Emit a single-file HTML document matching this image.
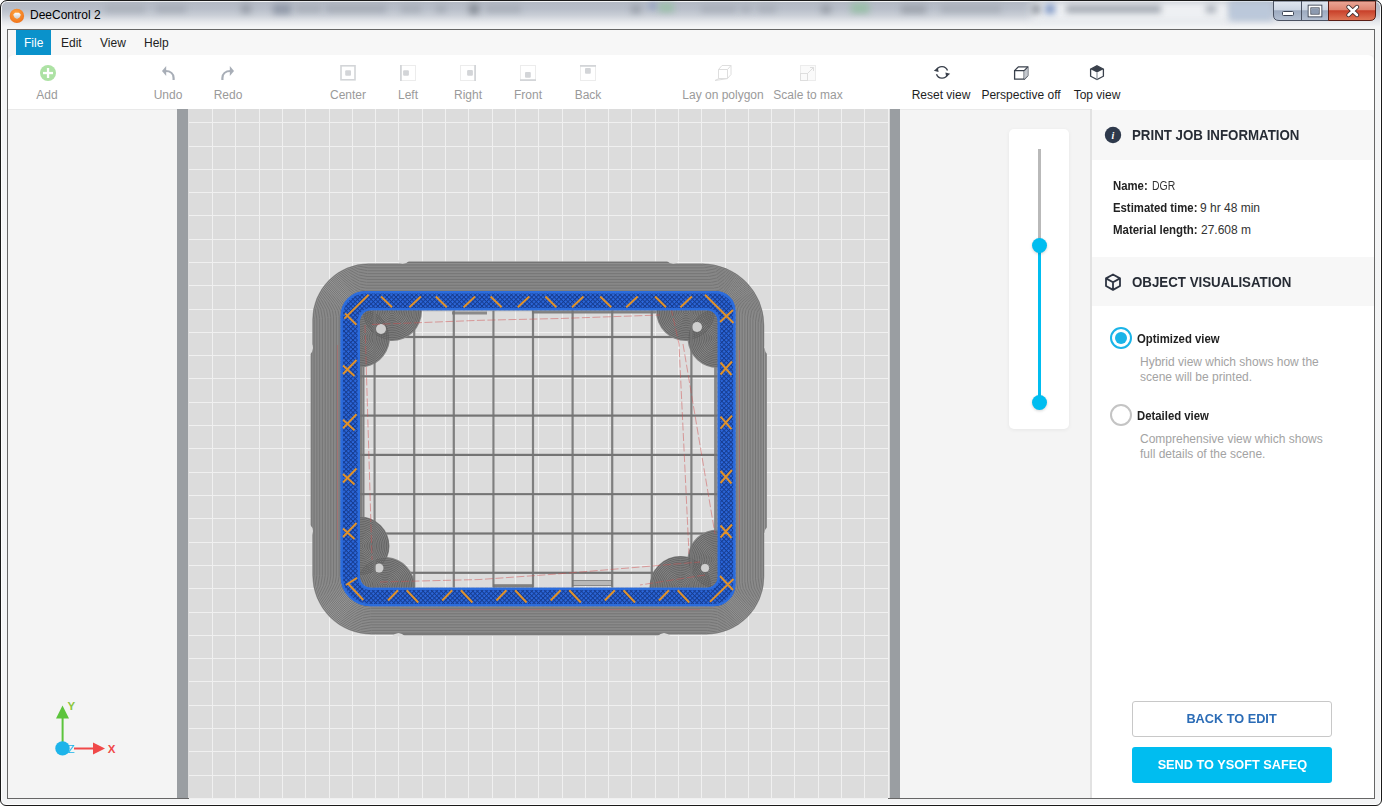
<!DOCTYPE html>
<html><head><meta charset="utf-8">
<style>
*{margin:0;padding:0;box-sizing:border-box}
html,body{width:1382px;height:806px;overflow:hidden;background:#fff}
body{font-family:"Liberation Sans",sans-serif;position:relative}
.a{position:absolute}
.t{position:absolute;white-space:nowrap;line-height:1}
#frame{left:0;top:0;width:1382px;height:806px;border:1px solid #1a1a1a;border-radius:7px 7px 6px 6px;box-shadow:inset 0 0 0 1px rgba(255,255,255,0.85);
 background:linear-gradient(#b3b9c4 0px,#b8bec9 8px,#c9ced6 14px,#e6e8ec 21px,#f4f5f6 26px,#f3f4f5 100%);overflow:hidden}
.tl{font-size:12px;color:#9a9a9a;text-align:center;width:100px;top:89px}
.tl.on{color:#1e1e1e}
.ph{font-size:14px;font-weight:bold;color:#272c35;transform-origin:0 0;transform:scaleX(0.95)}
.inf{font-size:12px;color:#333}
.inf b{color:#222}
.rl{font-size:12px;font-weight:bold;color:#222;transform-origin:0 0;transform:scaleX(0.945)}
.ds{font-size:12px;color:#a3a3a3}
</style></head><body>
<div id="frame" class="a">
  <div class="a" style="left:1030px;top:0px;width:200px;height:22px;background:#eef0f3;filter:blur(4.0px)"></div><div class="a" style="left:1228px;top:0px;width:44px;height:20px;background:#bbc8da;filter:blur(3.0px)"></div><div class="a" style="left:104px;top:4px;width:40px;height:7px;background:#aab0ba;filter:blur(3px)"></div><div class="a" style="left:155px;top:4px;width:30px;height:7px;background:#a6acb6;filter:blur(3px)"></div><div class="a" style="left:240px;top:3px;width:10px;height:9px;background:#9aa0aa;filter:blur(3px)"></div><div class="a" style="left:272px;top:3px;width:18px;height:10px;background:#929aa9;filter:blur(3px)"></div><div class="a" style="left:295px;top:4px;width:25px;height:7px;background:#a8aeb8;filter:blur(3px)"></div><div class="a" style="left:325px;top:4px;width:60px;height:7px;background:#a5abb5;filter:blur(3px)"></div><div class="a" style="left:400px;top:4px;width:20px;height:7px;background:#a8aeb8;filter:blur(3px)"></div><div class="a" style="left:435px;top:4px;width:10px;height:7px;background:#a5abb5;filter:blur(3px)"></div><div class="a" style="left:468px;top:3px;width:10px;height:10px;background:#8b919a;filter:blur(3px)"></div><div class="a" style="left:485px;top:4px;width:35px;height:7px;background:#a8aeb8;filter:blur(3px)"></div><div class="a" style="left:630px;top:4px;width:10px;height:8px;background:#9ca2ac;filter:blur(3px)"></div><div class="a" style="left:648px;top:2px;width:8px;height:6px;background:#90a0c1;filter:blur(3px)"></div><div class="a" style="left:658px;top:2px;width:15px;height:9px;background:#9cc0aa;filter:blur(3px)"></div><div class="a" style="left:700px;top:4px;width:35px;height:7px;background:#a9afb9;filter:blur(3px)"></div><div class="a" style="left:740px;top:4px;width:10px;height:7px;background:#a9afb9;filter:blur(3px)"></div><div class="a" style="left:757px;top:4px;width:18px;height:7px;background:#a9afb9;filter:blur(3px)"></div><div class="a" style="left:820px;top:4px;width:10px;height:8px;background:#9aa0a9;filter:blur(3px)"></div><div class="a" style="left:850px;top:2px;width:18px;height:10px;background:#99c0a8;filter:blur(3px)"></div><div class="a" style="left:900px;top:4px;width:25px;height:8px;background:#9da3ac;filter:blur(3px)"></div><div class="a" style="left:940px;top:4px;width:60px;height:7px;background:#a8aeb8;filter:blur(3px)"></div><div class="a" style="left:1030px;top:3px;width:10px;height:10px;background:#9aa0a9;filter:blur(3px)"></div><div class="a" style="left:1044px;top:3px;width:10px;height:10px;background:#879ec8;filter:blur(3px)"></div><div class="a" style="left:1065px;top:4px;width:95px;height:8px;background:#a4aab3;filter:blur(3px)"></div><div class="a" style="left:1205px;top:4px;width:10px;height:8px;background:#acb2bb;filter:blur(3px)"></div>
  <svg class="a" style="left:7px;top:6px" width="18" height="18" viewBox="0 0 18 18"><defs><radialGradient id="og" cx="0.45" cy="0.35" r="0.7"><stop offset="0" stop-color="#ffa640"/><stop offset="1" stop-color="#ee6f18"/></radialGradient><linearGradient id="wg" x1="0" y1="0" x2="0" y2="1"><stop offset="0" stop-color="#fff"/><stop offset="1" stop-color="#c8c8c8"/></linearGradient></defs><circle cx="8.9" cy="8.9" r="7.2" fill="url(#og)"/><path d="M5.2,7.8 L7,5.7 L11,5.7 L12.9,7.8 L11.5,10.5 L9,12.1 L6.5,10.5 Z" fill="url(#wg)"/></svg>
  <div class="t" style="left:29px;top:8px;font-size:12px;color:#000">DeeControl 2</div>
  <svg class="a" style="left:1271px;top:0" width="106" height="21" viewBox="0 0 106 21">
<defs><linearGradient id="gb" x1="0" y1="0" x2="0" y2="1"><stop offset="0" stop-color="#e2e8f1"/><stop offset="0.45" stop-color="#cdd6e3"/><stop offset="0.5" stop-color="#9dabc0"/><stop offset="1" stop-color="#b4c0d2"/></linearGradient>
<linearGradient id="gr" x1="0" y1="0" x2="0" y2="1"><stop offset="0" stop-color="#eaa898"/><stop offset="0.45" stop-color="#de8470"/><stop offset="0.5" stop-color="#c8402a"/><stop offset="1" stop-color="#e07858"/></linearGradient></defs>
<path d="M1.5,0 V14 Q1.5,19.5 7,19.5 H56.5 V0 Z" fill="url(#gb)" stroke="#4a5262" stroke-width="1"/>
<path d="M29.5,0 V19.5" stroke="#4a5262" stroke-width="1"/>
<path d="M56.5,0 V19.5 H98 Q103.5,19.5 103.5,14 V0 Z" fill="url(#gr)" stroke="#5a1c14" stroke-width="1"/>
<rect x="10.5" y="10.5" width="11" height="4" rx="1" fill="#fff" stroke="#3a4252" stroke-width="1"/>
<rect x="37.5" y="5.5" width="11" height="9" fill="none" stroke="#3a4252" stroke-width="3.6"/>
<rect x="37.5" y="5.5" width="11" height="9" fill="none" stroke="#fff" stroke-width="1.8"/>
<rect x="39.5" y="7.5" width="7" height="5" fill="#8c9ab0"/>
<path d="M76.5,6 L85,14 M85,6 L76.5,14" stroke="#3a2a2a" stroke-width="4.4" stroke-linecap="round"/>
<path d="M76.5,6 L85,14 M85,6 L76.5,14" stroke="#fff" stroke-width="2.6" stroke-linecap="round"/>
</svg>
</div>
<!-- client border -->
<div class="a" style="left:7px;top:29px;width:1368px;height:770px;border:1px solid #666;background:#f4f4f4"></div>
<!-- menu -->
<div class="a" style="left:8px;top:30px;width:1366px;height:25px;background:#f7f7f7"></div>
<div class="a" style="left:16px;top:30px;width:35px;height:25px;background:#0a92cb"></div>
<div class="t" style="left:24px;top:37px;font-size:12px;color:#fff">File</div>
<div class="t" style="left:61px;top:37px;font-size:12px;color:#222">Edit</div>
<div class="t" style="left:100px;top:37px;font-size:12px;color:#222">View</div>
<div class="t" style="left:144px;top:37px;font-size:12px;color:#222">Help</div>
<!-- toolbar -->
<div class="a" style="left:8px;top:55px;width:1366px;height:54px;background:#fff;border-radius:6px 6px 0 0"></div>
<div class="t tl" style="left:-3px">Add</div>
<div class="t tl" style="left:118px">Undo</div>
<div class="t tl" style="left:178px">Redo</div>
<div class="t tl" style="left:298px">Center</div>
<div class="t tl" style="left:358px">Left</div>
<div class="t tl" style="left:418px">Right</div>
<div class="t tl" style="left:478px">Front</div>
<div class="t tl" style="left:538px">Back</div>
<div class="t tl" style="left:673px">Lay on polygon</div>
<div class="t tl" style="left:758px">Scale to max</div>
<div class="t tl on" style="left:891px">Reset view</div>
<div class="t tl on" style="left:971px">Perspective off</div>
<div class="t tl on" style="left:1047px">Top view</div>
<!-- viewport -->
<div class="a" style="left:177px;top:109px;width:11px;height:689px;background:#9a9ea2"></div>
<div class="a" style="left:188px;top:109px;width:702px;height:689px;background:#dcdcdc"></div>
<div class="a" style="left:890px;top:109px;width:10px;height:689px;background:#9a9ea2"></div>
<svg class="a" style="left:0;top:0" width="1382" height="806" viewBox="0 0 1382 806">
<rect x="212" y="109" width="1" height="689" fill="#f0f0f0"/><rect x="235" y="109" width="1" height="689" fill="#f0f0f0"/><rect x="259" y="109" width="1" height="689" fill="#f0f0f0"/><rect x="282" y="109" width="1" height="689" fill="#f0f0f0"/><rect x="305" y="109" width="1" height="689" fill="#f0f0f0"/><rect x="329" y="109" width="1" height="689" fill="#f0f0f0"/><rect x="352" y="109" width="1" height="689" fill="#f0f0f0"/><rect x="375" y="109" width="1" height="689" fill="#f0f0f0"/><rect x="398" y="109" width="1" height="689" fill="#f0f0f0"/><rect x="422" y="109" width="1" height="689" fill="#f0f0f0"/><rect x="445" y="109" width="1" height="689" fill="#f0f0f0"/><rect x="468" y="109" width="1" height="689" fill="#f0f0f0"/><rect x="492" y="109" width="1" height="689" fill="#f0f0f0"/><rect x="515" y="109" width="1" height="689" fill="#f0f0f0"/><rect x="538" y="109" width="1" height="689" fill="#f0f0f0"/><rect x="562" y="109" width="1" height="689" fill="#f0f0f0"/><rect x="585" y="109" width="1" height="689" fill="#f0f0f0"/><rect x="608" y="109" width="1" height="689" fill="#f0f0f0"/><rect x="631" y="109" width="1" height="689" fill="#f0f0f0"/><rect x="655" y="109" width="1" height="689" fill="#f0f0f0"/><rect x="678" y="109" width="1" height="689" fill="#f0f0f0"/><rect x="701" y="109" width="1" height="689" fill="#f0f0f0"/><rect x="725" y="109" width="1" height="689" fill="#f0f0f0"/><rect x="748" y="109" width="1" height="689" fill="#f0f0f0"/><rect x="771" y="109" width="1" height="689" fill="#f0f0f0"/><rect x="794" y="109" width="1" height="689" fill="#f0f0f0"/><rect x="818" y="109" width="1" height="689" fill="#f0f0f0"/><rect x="841" y="109" width="1" height="689" fill="#f0f0f0"/><rect x="864" y="109" width="1" height="689" fill="#f0f0f0"/><rect x="888" y="109" width="1" height="689" fill="#f0f0f0"/><rect x="189" y="122" width="699" height="1" fill="#f0f0f0"/><rect x="189" y="146" width="699" height="1" fill="#f0f0f0"/><rect x="189" y="169" width="699" height="1" fill="#f0f0f0"/><rect x="189" y="192" width="699" height="1" fill="#f0f0f0"/><rect x="189" y="215" width="699" height="1" fill="#f0f0f0"/><rect x="189" y="239" width="699" height="1" fill="#f0f0f0"/><rect x="189" y="262" width="699" height="1" fill="#f0f0f0"/><rect x="189" y="285" width="699" height="1" fill="#f0f0f0"/><rect x="189" y="309" width="699" height="1" fill="#f0f0f0"/><rect x="189" y="332" width="699" height="1" fill="#f0f0f0"/><rect x="189" y="355" width="699" height="1" fill="#f0f0f0"/><rect x="189" y="378" width="699" height="1" fill="#f0f0f0"/><rect x="189" y="402" width="699" height="1" fill="#f0f0f0"/><rect x="189" y="425" width="699" height="1" fill="#f0f0f0"/><rect x="189" y="448" width="699" height="1" fill="#f0f0f0"/><rect x="189" y="472" width="699" height="1" fill="#f0f0f0"/><rect x="189" y="495" width="699" height="1" fill="#f0f0f0"/><rect x="189" y="518" width="699" height="1" fill="#f0f0f0"/><rect x="189" y="542" width="699" height="1" fill="#f0f0f0"/><rect x="189" y="565" width="699" height="1" fill="#f0f0f0"/><rect x="189" y="588" width="699" height="1" fill="#f0f0f0"/><rect x="189" y="612" width="699" height="1" fill="#f0f0f0"/><rect x="189" y="635" width="699" height="1" fill="#f0f0f0"/><rect x="189" y="658" width="699" height="1" fill="#f0f0f0"/><rect x="189" y="681" width="699" height="1" fill="#f0f0f0"/><rect x="189" y="705" width="699" height="1" fill="#f0f0f0"/><rect x="189" y="728" width="699" height="1" fill="#f0f0f0"/><rect x="189" y="751" width="699" height="1" fill="#f0f0f0"/><rect x="189" y="775" width="699" height="1" fill="#f0f0f0"/><rect x="189" y="798" width="699" height="1" fill="#f0f0f0"/>
<defs><pattern id="hatch" width="3.2" height="3.2" patternUnits="userSpaceOnUse" patternTransform="rotate(45)"><rect width="3.2" height="3.2" fill="#2c68dc"/><rect width="1.0" height="3.2" fill="#163c90"/><rect width="3.2" height="1.0" fill="#163c90"/></pattern><clipPath id="inner"><path d="M371,310.3 H706.7 A11,11 0 0 1 717.7,321.3 V576.7 A11,11 0 0 1 706.7,587.7 H371 A11,11 0 0 1 360,576.7 V321.3 A11,11 0 0 1 371,310.3 Z"/></clipPath></defs><rect x="403" y="261.3" width="270" height="4.5" fill="#999"/><rect x="398.5" y="632.5" width="265.5" height="3.0" fill="#999"/><rect x="310.5" y="348" width="4.5" height="183" fill="#999"/><rect x="762.3" y="348" width="4.7000000000000455" height="185" fill="#999"/><path d="M368.40,263.50 H702.30 A62.00,62.00 0 0 1 764.30,325.50 V576.50 A58.00,58.00 0 0 1 706.30,634.50 H371.40 A59.00,59.00 0 0 1 312.40,575.50 V319.50 A56.00,56.00 0 0 1 368.40,263.50 Z M365.50,291.00 H715.50 A20.00,20.00 0 0 1 735.50,311.00 V584.30 A22.00,22.00 0 0 1 713.50,606.30 H370.50 A30.00,30.00 0 0 1 340.50,576.30 V316.00 A25.00,25.00 0 0 1 365.50,291.00 Z" fill="#999" fill-rule="evenodd"/><path d="M365.58,290.24 H715.13 A21.17,21.17 0 0 1 736.30,311.40 V584.08 A23.00,23.00 0 0 1 713.30,607.08 H370.52 A30.81,30.81 0 0 1 339.72,576.28 V316.10 A25.86,25.86 0 0 1 365.58,290.24 Z" fill="none" stroke="#6a6a6a" stroke-width="0.75"/><path d="M365.74,288.71 H714.40 A23.50,23.50 0 0 1 737.90,312.21 V583.65 A25.00,25.00 0 0 1 712.90,608.65 H370.57 A32.42,32.42 0 0 1 338.16,576.23 V316.29 A27.58,27.58 0 0 1 365.74,288.71 Z" fill="none" stroke="#6a6a6a" stroke-width="0.75"/><path d="M365.90,287.18 H713.67 A25.83,25.83 0 0 1 739.50,313.01 V583.22 A27.00,27.00 0 0 1 712.50,610.22 H370.62 A34.03,34.03 0 0 1 336.60,576.19 V316.49 A29.31,29.31 0 0 1 365.90,287.18 Z" fill="none" stroke="#6a6a6a" stroke-width="0.75"/><path d="M366.06,285.65 H712.93 A28.17,28.17 0 0 1 741.10,313.82 V582.78 A29.00,29.00 0 0 1 712.10,611.78 H370.67 A35.64,35.64 0 0 1 335.04,576.14 V316.68 A31.03,31.03 0 0 1 366.06,285.65 Z" fill="none" stroke="#6a6a6a" stroke-width="0.75"/><path d="M366.23,284.12 H712.20 A30.50,30.50 0 0 1 742.70,314.62 V582.35 A31.00,31.00 0 0 1 711.70,613.35 H370.73 A37.25,37.25 0 0 1 333.48,576.10 V316.88 A32.75,32.75 0 0 1 366.23,284.12 Z" fill="none" stroke="#6a6a6a" stroke-width="0.75"/><path d="M366.39,282.60 H711.47 A32.83,32.83 0 0 1 744.30,315.43 V581.92 A33.00,33.00 0 0 1 711.30,614.92 H370.77 A38.86,38.86 0 0 1 331.91,576.06 V317.07 A34.47,34.47 0 0 1 366.39,282.60 Z" fill="none" stroke="#6a6a6a" stroke-width="0.75"/><path d="M366.55,281.07 H710.73 A35.17,35.17 0 0 1 745.90,316.24 V581.48 A35.00,35.00 0 0 1 710.90,616.48 H370.82 A40.47,40.47 0 0 1 330.35,576.01 V317.26 A36.19,36.19 0 0 1 366.55,281.07 Z" fill="none" stroke="#6a6a6a" stroke-width="0.75"/><path d="M366.71,279.54 H710.00 A37.50,37.50 0 0 1 747.50,317.04 V581.05 A37.00,37.00 0 0 1 710.50,618.05 H370.87 A42.08,42.08 0 0 1 328.79,575.97 V317.46 A37.92,37.92 0 0 1 366.71,279.54 Z" fill="none" stroke="#6a6a6a" stroke-width="0.75"/><path d="M366.87,278.01 H709.27 A39.83,39.83 0 0 1 749.10,317.85 V580.62 A39.00,39.00 0 0 1 710.10,619.62 H370.93 A43.69,43.69 0 0 1 327.23,575.92 V317.65 A39.64,39.64 0 0 1 366.87,278.01 Z" fill="none" stroke="#6a6a6a" stroke-width="0.75"/><path d="M367.03,276.49 H708.53 A42.17,42.17 0 0 1 750.70,318.65 V580.18 A41.00,41.00 0 0 1 709.70,621.18 H370.97 A45.31,45.31 0 0 1 325.67,575.88 V317.85 A41.36,41.36 0 0 1 367.03,276.49 Z" fill="none" stroke="#6a6a6a" stroke-width="0.75"/><path d="M367.19,274.96 H707.80 A44.50,44.50 0 0 1 752.30,319.46 V579.75 A43.00,43.00 0 0 1 709.30,622.75 H371.03 A46.92,46.92 0 0 1 324.11,575.83 V318.04 A43.08,43.08 0 0 1 367.19,274.96 Z" fill="none" stroke="#6a6a6a" stroke-width="0.75"/><path d="M367.35,273.43 H707.07 A46.83,46.83 0 0 1 753.90,320.26 V579.32 A45.00,45.00 0 0 1 708.90,624.32 H371.07 A48.53,48.53 0 0 1 322.55,575.79 V318.24 A44.81,44.81 0 0 1 367.35,273.43 Z" fill="none" stroke="#6a6a6a" stroke-width="0.75"/><path d="M367.51,271.90 H706.33 A49.17,49.17 0 0 1 755.50,321.07 V578.88 A47.00,47.00 0 0 1 708.50,625.88 H371.12 A50.14,50.14 0 0 1 320.99,575.74 V318.43 A46.53,46.53 0 0 1 367.51,271.90 Z" fill="none" stroke="#6a6a6a" stroke-width="0.75"/><path d="M367.67,270.38 H705.60 A51.50,51.50 0 0 1 757.10,321.88 V578.45 A49.00,49.00 0 0 1 708.10,627.45 H371.17 A51.75,51.75 0 0 1 319.42,575.70 V318.62 A48.25,48.25 0 0 1 367.67,270.38 Z" fill="none" stroke="#6a6a6a" stroke-width="0.75"/><path d="M367.84,268.85 H704.87 A53.83,53.83 0 0 1 758.70,322.68 V578.02 A51.00,51.00 0 0 1 707.70,629.02 H371.23 A53.36,53.36 0 0 1 317.86,575.66 V318.82 A49.97,49.97 0 0 1 367.84,268.85 Z" fill="none" stroke="#6a6a6a" stroke-width="0.75"/><path d="M368.00,267.32 H704.13 A56.17,56.17 0 0 1 760.30,323.49 V577.58 A53.00,53.00 0 0 1 707.30,630.58 H371.27 A54.97,54.97 0 0 1 316.30,575.61 V319.01 A51.69,51.69 0 0 1 368.00,267.32 Z" fill="none" stroke="#6a6a6a" stroke-width="0.75"/><path d="M368.16,265.79 H703.40 A58.50,58.50 0 0 1 761.90,324.29 V577.15 A55.00,55.00 0 0 1 706.90,632.15 H371.32 A56.58,56.58 0 0 1 314.74,575.57 V319.21 A53.42,53.42 0 0 1 368.16,265.79 Z" fill="none" stroke="#6a6a6a" stroke-width="0.75"/><path d="M368.32,264.26 H702.67 A60.83,60.83 0 0 1 763.50,325.10 V576.72 A57.00,57.00 0 0 1 706.50,633.72 H371.38 A58.19,58.19 0 0 1 313.18,575.52 V319.40 A55.14,55.14 0 0 1 368.32,264.26 Z" fill="none" stroke="#6a6a6a" stroke-width="0.75"/><path d="M403,262.5 H673 M398.5,634.3 H664 M311.7,348 V531 M765.8,348 V533" stroke="#6a6a6a" stroke-width="0.75"/><path d="M396,260.3 Q403,267.3 410,260.3 ZM666,260.3 Q673,267.3 680,260.3 ZM391.5,636.5 Q398.5,629.5 405.5,636.5 ZM657,636.5 Q664,629.5 671,636.5 ZM309.5,341 Q316.5,348 309.5,355 ZM309.5,524 Q316.5,531 309.5,538 ZM768,341 Q761,348 768,355 ZM768,526 Q761,533 768,540 Z" fill="#dcdcdc"/><g clip-path="url(#inner)"><rect x="360" y="316.3" width="4.5" height="265.40000000000003" fill="#7e7e7e"/><rect x="362" y="316.3" width="0.8" height="265.40000000000003" fill="#9c9c9c"/><rect x="714.2" y="316.3" width="3.5" height="265.40000000000003" fill="#7e7e7e"/><rect x="715.7" y="316.3" width="0.8" height="265.40000000000003" fill="#9c9c9c"/><rect x="532" y="310.3" width="124" height="3.2" fill="#808080"/><rect x="493" y="584.2" width="40" height="3.5" fill="#808080"/><rect x="360" y="310.3" width="357.70000000000005" height="1" fill="#9a9a9a" opacity="0.6"/><rect x="360" y="335.9" width="357.70000000000005" height="2.2" fill="#747474"/><rect x="360" y="375.2" width="357.70000000000005" height="2.2" fill="#747474"/><rect x="360" y="414.5" width="357.70000000000005" height="2.2" fill="#747474"/><rect x="360" y="453.8" width="357.70000000000005" height="2.2" fill="#747474"/><rect x="360" y="493.1" width="357.70000000000005" height="2.2" fill="#747474"/><rect x="360" y="532.4" width="357.70000000000005" height="2.2" fill="#747474"/><rect x="360" y="571.7" width="357.70000000000005" height="2.2" fill="#747474"/><rect x="452" y="311.5" width="35" height="3" fill="#8a8a8a"/><rect x="572.5" y="580.5" width="39" height="5" fill="#b8b8b8" stroke="#888" stroke-width="1"/><clipPath id="bl1"><circle cx="392" cy="311" r="30"/><circle cx="360" cy="337.5" r="30"/></clipPath><g clip-path="url(#bl1)"><rect x="325" y="276" width="102" height="96.5" fill="#858585"/><circle cx="392" cy="311" r="1.2" fill="none" stroke="#5e5e5e" stroke-width="0.85"/><circle cx="392" cy="311" r="2.9" fill="none" stroke="#5e5e5e" stroke-width="0.85"/><circle cx="392" cy="311" r="4.6" fill="none" stroke="#5e5e5e" stroke-width="0.85"/><circle cx="392" cy="311" r="6.3" fill="none" stroke="#5e5e5e" stroke-width="0.85"/><circle cx="392" cy="311" r="8.0" fill="none" stroke="#5e5e5e" stroke-width="0.85"/><circle cx="392" cy="311" r="9.7" fill="none" stroke="#5e5e5e" stroke-width="0.85"/><circle cx="392" cy="311" r="11.4" fill="none" stroke="#5e5e5e" stroke-width="0.85"/><circle cx="392" cy="311" r="13.1" fill="none" stroke="#5e5e5e" stroke-width="0.85"/><circle cx="392" cy="311" r="14.8" fill="none" stroke="#5e5e5e" stroke-width="0.85"/><circle cx="392" cy="311" r="16.5" fill="none" stroke="#5e5e5e" stroke-width="0.85"/><circle cx="392" cy="311" r="18.2" fill="none" stroke="#5e5e5e" stroke-width="0.85"/><circle cx="392" cy="311" r="19.9" fill="none" stroke="#5e5e5e" stroke-width="0.85"/><circle cx="392" cy="311" r="21.6" fill="none" stroke="#5e5e5e" stroke-width="0.85"/><circle cx="392" cy="311" r="23.3" fill="none" stroke="#5e5e5e" stroke-width="0.85"/><circle cx="392" cy="311" r="25.0" fill="none" stroke="#5e5e5e" stroke-width="0.85"/><circle cx="392" cy="311" r="26.7" fill="none" stroke="#5e5e5e" stroke-width="0.85"/><circle cx="392" cy="311" r="28.4" fill="none" stroke="#5e5e5e" stroke-width="0.85"/><circle cx="360" cy="337.5" r="1.2" fill="none" stroke="#5e5e5e" stroke-width="0.85"/><circle cx="360" cy="337.5" r="2.9" fill="none" stroke="#5e5e5e" stroke-width="0.85"/><circle cx="360" cy="337.5" r="4.6" fill="none" stroke="#5e5e5e" stroke-width="0.85"/><circle cx="360" cy="337.5" r="6.3" fill="none" stroke="#5e5e5e" stroke-width="0.85"/><circle cx="360" cy="337.5" r="8.0" fill="none" stroke="#5e5e5e" stroke-width="0.85"/><circle cx="360" cy="337.5" r="9.7" fill="none" stroke="#5e5e5e" stroke-width="0.85"/><circle cx="360" cy="337.5" r="11.4" fill="none" stroke="#5e5e5e" stroke-width="0.85"/><circle cx="360" cy="337.5" r="13.1" fill="none" stroke="#5e5e5e" stroke-width="0.85"/><circle cx="360" cy="337.5" r="14.8" fill="none" stroke="#5e5e5e" stroke-width="0.85"/><circle cx="360" cy="337.5" r="16.5" fill="none" stroke="#5e5e5e" stroke-width="0.85"/><circle cx="360" cy="337.5" r="18.2" fill="none" stroke="#5e5e5e" stroke-width="0.85"/><circle cx="360" cy="337.5" r="19.9" fill="none" stroke="#5e5e5e" stroke-width="0.85"/><circle cx="360" cy="337.5" r="21.6" fill="none" stroke="#5e5e5e" stroke-width="0.85"/><circle cx="360" cy="337.5" r="23.3" fill="none" stroke="#5e5e5e" stroke-width="0.85"/><circle cx="360" cy="337.5" r="25.0" fill="none" stroke="#5e5e5e" stroke-width="0.85"/><circle cx="360" cy="337.5" r="26.7" fill="none" stroke="#5e5e5e" stroke-width="0.85"/><circle cx="360" cy="337.5" r="28.4" fill="none" stroke="#5e5e5e" stroke-width="0.85"/></g><circle cx="381" cy="329" r="5" fill="#cfcfcf"/><clipPath id="bl2"><circle cx="686" cy="311" r="30"/><circle cx="717.5" cy="338" r="30"/></clipPath><g clip-path="url(#bl2)"><rect x="651" y="276" width="101.5" height="97" fill="#858585"/><circle cx="686" cy="311" r="1.2" fill="none" stroke="#5e5e5e" stroke-width="0.85"/><circle cx="686" cy="311" r="2.9" fill="none" stroke="#5e5e5e" stroke-width="0.85"/><circle cx="686" cy="311" r="4.6" fill="none" stroke="#5e5e5e" stroke-width="0.85"/><circle cx="686" cy="311" r="6.3" fill="none" stroke="#5e5e5e" stroke-width="0.85"/><circle cx="686" cy="311" r="8.0" fill="none" stroke="#5e5e5e" stroke-width="0.85"/><circle cx="686" cy="311" r="9.7" fill="none" stroke="#5e5e5e" stroke-width="0.85"/><circle cx="686" cy="311" r="11.4" fill="none" stroke="#5e5e5e" stroke-width="0.85"/><circle cx="686" cy="311" r="13.1" fill="none" stroke="#5e5e5e" stroke-width="0.85"/><circle cx="686" cy="311" r="14.8" fill="none" stroke="#5e5e5e" stroke-width="0.85"/><circle cx="686" cy="311" r="16.5" fill="none" stroke="#5e5e5e" stroke-width="0.85"/><circle cx="686" cy="311" r="18.2" fill="none" stroke="#5e5e5e" stroke-width="0.85"/><circle cx="686" cy="311" r="19.9" fill="none" stroke="#5e5e5e" stroke-width="0.85"/><circle cx="686" cy="311" r="21.6" fill="none" stroke="#5e5e5e" stroke-width="0.85"/><circle cx="686" cy="311" r="23.3" fill="none" stroke="#5e5e5e" stroke-width="0.85"/><circle cx="686" cy="311" r="25.0" fill="none" stroke="#5e5e5e" stroke-width="0.85"/><circle cx="686" cy="311" r="26.7" fill="none" stroke="#5e5e5e" stroke-width="0.85"/><circle cx="686" cy="311" r="28.4" fill="none" stroke="#5e5e5e" stroke-width="0.85"/><circle cx="717.5" cy="338" r="1.2" fill="none" stroke="#5e5e5e" stroke-width="0.85"/><circle cx="717.5" cy="338" r="2.9" fill="none" stroke="#5e5e5e" stroke-width="0.85"/><circle cx="717.5" cy="338" r="4.6" fill="none" stroke="#5e5e5e" stroke-width="0.85"/><circle cx="717.5" cy="338" r="6.3" fill="none" stroke="#5e5e5e" stroke-width="0.85"/><circle cx="717.5" cy="338" r="8.0" fill="none" stroke="#5e5e5e" stroke-width="0.85"/><circle cx="717.5" cy="338" r="9.7" fill="none" stroke="#5e5e5e" stroke-width="0.85"/><circle cx="717.5" cy="338" r="11.4" fill="none" stroke="#5e5e5e" stroke-width="0.85"/><circle cx="717.5" cy="338" r="13.1" fill="none" stroke="#5e5e5e" stroke-width="0.85"/><circle cx="717.5" cy="338" r="14.8" fill="none" stroke="#5e5e5e" stroke-width="0.85"/><circle cx="717.5" cy="338" r="16.5" fill="none" stroke="#5e5e5e" stroke-width="0.85"/><circle cx="717.5" cy="338" r="18.2" fill="none" stroke="#5e5e5e" stroke-width="0.85"/><circle cx="717.5" cy="338" r="19.9" fill="none" stroke="#5e5e5e" stroke-width="0.85"/><circle cx="717.5" cy="338" r="21.6" fill="none" stroke="#5e5e5e" stroke-width="0.85"/><circle cx="717.5" cy="338" r="23.3" fill="none" stroke="#5e5e5e" stroke-width="0.85"/><circle cx="717.5" cy="338" r="25.0" fill="none" stroke="#5e5e5e" stroke-width="0.85"/><circle cx="717.5" cy="338" r="26.7" fill="none" stroke="#5e5e5e" stroke-width="0.85"/><circle cx="717.5" cy="338" r="28.4" fill="none" stroke="#5e5e5e" stroke-width="0.85"/></g><circle cx="697" cy="327" r="5" fill="#cfcfcf"/><clipPath id="bl3"><circle cx="360" cy="546" r="29.5"/><circle cx="385" cy="587" r="30"/></clipPath><g clip-path="url(#bl3)"><rect x="325" y="511" width="95" height="111" fill="#858585"/><circle cx="360" cy="546" r="1.2" fill="none" stroke="#5e5e5e" stroke-width="0.85"/><circle cx="360" cy="546" r="2.9" fill="none" stroke="#5e5e5e" stroke-width="0.85"/><circle cx="360" cy="546" r="4.6" fill="none" stroke="#5e5e5e" stroke-width="0.85"/><circle cx="360" cy="546" r="6.3" fill="none" stroke="#5e5e5e" stroke-width="0.85"/><circle cx="360" cy="546" r="8.0" fill="none" stroke="#5e5e5e" stroke-width="0.85"/><circle cx="360" cy="546" r="9.7" fill="none" stroke="#5e5e5e" stroke-width="0.85"/><circle cx="360" cy="546" r="11.4" fill="none" stroke="#5e5e5e" stroke-width="0.85"/><circle cx="360" cy="546" r="13.1" fill="none" stroke="#5e5e5e" stroke-width="0.85"/><circle cx="360" cy="546" r="14.8" fill="none" stroke="#5e5e5e" stroke-width="0.85"/><circle cx="360" cy="546" r="16.5" fill="none" stroke="#5e5e5e" stroke-width="0.85"/><circle cx="360" cy="546" r="18.2" fill="none" stroke="#5e5e5e" stroke-width="0.85"/><circle cx="360" cy="546" r="19.9" fill="none" stroke="#5e5e5e" stroke-width="0.85"/><circle cx="360" cy="546" r="21.6" fill="none" stroke="#5e5e5e" stroke-width="0.85"/><circle cx="360" cy="546" r="23.3" fill="none" stroke="#5e5e5e" stroke-width="0.85"/><circle cx="360" cy="546" r="25.0" fill="none" stroke="#5e5e5e" stroke-width="0.85"/><circle cx="360" cy="546" r="26.7" fill="none" stroke="#5e5e5e" stroke-width="0.85"/><circle cx="360" cy="546" r="28.4" fill="none" stroke="#5e5e5e" stroke-width="0.85"/><circle cx="385" cy="587" r="1.2" fill="none" stroke="#5e5e5e" stroke-width="0.85"/><circle cx="385" cy="587" r="2.9" fill="none" stroke="#5e5e5e" stroke-width="0.85"/><circle cx="385" cy="587" r="4.6" fill="none" stroke="#5e5e5e" stroke-width="0.85"/><circle cx="385" cy="587" r="6.3" fill="none" stroke="#5e5e5e" stroke-width="0.85"/><circle cx="385" cy="587" r="8.0" fill="none" stroke="#5e5e5e" stroke-width="0.85"/><circle cx="385" cy="587" r="9.7" fill="none" stroke="#5e5e5e" stroke-width="0.85"/><circle cx="385" cy="587" r="11.4" fill="none" stroke="#5e5e5e" stroke-width="0.85"/><circle cx="385" cy="587" r="13.1" fill="none" stroke="#5e5e5e" stroke-width="0.85"/><circle cx="385" cy="587" r="14.8" fill="none" stroke="#5e5e5e" stroke-width="0.85"/><circle cx="385" cy="587" r="16.5" fill="none" stroke="#5e5e5e" stroke-width="0.85"/><circle cx="385" cy="587" r="18.2" fill="none" stroke="#5e5e5e" stroke-width="0.85"/><circle cx="385" cy="587" r="19.9" fill="none" stroke="#5e5e5e" stroke-width="0.85"/><circle cx="385" cy="587" r="21.6" fill="none" stroke="#5e5e5e" stroke-width="0.85"/><circle cx="385" cy="587" r="23.3" fill="none" stroke="#5e5e5e" stroke-width="0.85"/><circle cx="385" cy="587" r="25.0" fill="none" stroke="#5e5e5e" stroke-width="0.85"/><circle cx="385" cy="587" r="26.7" fill="none" stroke="#5e5e5e" stroke-width="0.85"/><circle cx="385" cy="587" r="28.4" fill="none" stroke="#5e5e5e" stroke-width="0.85"/></g><circle cx="379" cy="568" r="4.5" fill="#cfcfcf"/><clipPath id="bl4"><circle cx="717.5" cy="559.5" r="30"/><circle cx="680.5" cy="587" r="31"/></clipPath><g clip-path="url(#bl4)"><rect x="645.5" y="524.5" width="107.0" height="97.5" fill="#858585"/><circle cx="717.5" cy="559.5" r="1.2" fill="none" stroke="#5e5e5e" stroke-width="0.85"/><circle cx="717.5" cy="559.5" r="2.9" fill="none" stroke="#5e5e5e" stroke-width="0.85"/><circle cx="717.5" cy="559.5" r="4.6" fill="none" stroke="#5e5e5e" stroke-width="0.85"/><circle cx="717.5" cy="559.5" r="6.3" fill="none" stroke="#5e5e5e" stroke-width="0.85"/><circle cx="717.5" cy="559.5" r="8.0" fill="none" stroke="#5e5e5e" stroke-width="0.85"/><circle cx="717.5" cy="559.5" r="9.7" fill="none" stroke="#5e5e5e" stroke-width="0.85"/><circle cx="717.5" cy="559.5" r="11.4" fill="none" stroke="#5e5e5e" stroke-width="0.85"/><circle cx="717.5" cy="559.5" r="13.1" fill="none" stroke="#5e5e5e" stroke-width="0.85"/><circle cx="717.5" cy="559.5" r="14.8" fill="none" stroke="#5e5e5e" stroke-width="0.85"/><circle cx="717.5" cy="559.5" r="16.5" fill="none" stroke="#5e5e5e" stroke-width="0.85"/><circle cx="717.5" cy="559.5" r="18.2" fill="none" stroke="#5e5e5e" stroke-width="0.85"/><circle cx="717.5" cy="559.5" r="19.9" fill="none" stroke="#5e5e5e" stroke-width="0.85"/><circle cx="717.5" cy="559.5" r="21.6" fill="none" stroke="#5e5e5e" stroke-width="0.85"/><circle cx="717.5" cy="559.5" r="23.3" fill="none" stroke="#5e5e5e" stroke-width="0.85"/><circle cx="717.5" cy="559.5" r="25.0" fill="none" stroke="#5e5e5e" stroke-width="0.85"/><circle cx="717.5" cy="559.5" r="26.7" fill="none" stroke="#5e5e5e" stroke-width="0.85"/><circle cx="717.5" cy="559.5" r="28.4" fill="none" stroke="#5e5e5e" stroke-width="0.85"/><circle cx="680.5" cy="587" r="1.2" fill="none" stroke="#5e5e5e" stroke-width="0.85"/><circle cx="680.5" cy="587" r="2.9" fill="none" stroke="#5e5e5e" stroke-width="0.85"/><circle cx="680.5" cy="587" r="4.6" fill="none" stroke="#5e5e5e" stroke-width="0.85"/><circle cx="680.5" cy="587" r="6.3" fill="none" stroke="#5e5e5e" stroke-width="0.85"/><circle cx="680.5" cy="587" r="8.0" fill="none" stroke="#5e5e5e" stroke-width="0.85"/><circle cx="680.5" cy="587" r="9.7" fill="none" stroke="#5e5e5e" stroke-width="0.85"/><circle cx="680.5" cy="587" r="11.4" fill="none" stroke="#5e5e5e" stroke-width="0.85"/><circle cx="680.5" cy="587" r="13.1" fill="none" stroke="#5e5e5e" stroke-width="0.85"/><circle cx="680.5" cy="587" r="14.8" fill="none" stroke="#5e5e5e" stroke-width="0.85"/><circle cx="680.5" cy="587" r="16.5" fill="none" stroke="#5e5e5e" stroke-width="0.85"/><circle cx="680.5" cy="587" r="18.2" fill="none" stroke="#5e5e5e" stroke-width="0.85"/><circle cx="680.5" cy="587" r="19.9" fill="none" stroke="#5e5e5e" stroke-width="0.85"/><circle cx="680.5" cy="587" r="21.6" fill="none" stroke="#5e5e5e" stroke-width="0.85"/><circle cx="680.5" cy="587" r="23.3" fill="none" stroke="#5e5e5e" stroke-width="0.85"/><circle cx="680.5" cy="587" r="25.0" fill="none" stroke="#5e5e5e" stroke-width="0.85"/><circle cx="680.5" cy="587" r="26.7" fill="none" stroke="#5e5e5e" stroke-width="0.85"/><circle cx="680.5" cy="587" r="28.4" fill="none" stroke="#5e5e5e" stroke-width="0.85"/><circle cx="680.5" cy="587" r="30.1" fill="none" stroke="#5e5e5e" stroke-width="0.85"/></g><circle cx="705" cy="568" r="4" fill="#cfcfcf"/><rect x="373.5" y="310.3" width="2.2" height="277.40000000000003" fill="#747474" opacity="0.9"/><rect x="413.1" y="310.3" width="2.2" height="277.40000000000003" fill="#747474" opacity="0.9"/><rect x="452.7" y="310.3" width="2.2" height="277.40000000000003" fill="#747474" opacity="0.9"/><rect x="492.3" y="310.3" width="2.2" height="277.40000000000003" fill="#747474" opacity="0.9"/><rect x="531.9" y="310.3" width="2.2" height="277.40000000000003" fill="#747474" opacity="0.9"/><rect x="571.5" y="310.3" width="2.2" height="277.40000000000003" fill="#747474" opacity="0.9"/><rect x="611.1" y="310.3" width="2.2" height="277.40000000000003" fill="#747474" opacity="0.9"/><rect x="650.7" y="310.3" width="2.2" height="277.40000000000003" fill="#747474" opacity="0.9"/><rect x="690.3" y="310.3" width="2.2" height="277.40000000000003" fill="#747474" opacity="0.9"/><path d="M372,324.5 L480,320.3 L560,318.5 L660,315 M671,308 L679,344 L689,554 M683,344 L715,534 M365,325 L372,560 M380,582 L480,579.5 L553,574.3 L700,562 M705,575 L640,585" stroke="#d05050" stroke-width="0.7" stroke-dasharray="8 2.5" fill="none" opacity="0.7"/></g><path d="M365.50,291.00 H715.50 A20.00,20.00 0 0 1 735.50,311.00 V584.30 A22.00,22.00 0 0 1 713.50,606.30 H370.50 A30.00,30.00 0 0 1 340.50,576.30 V316.00 A25.00,25.00 0 0 1 365.50,291.00 Z M371,310.3 H706.7 A11,11 0 0 1 717.7,321.3 V576.7 A11,11 0 0 1 706.7,587.7 H371 A11,11 0 0 1 360,576.7 V321.3 A11,11 0 0 1 371,310.3 Z" fill="url(#hatch)" fill-rule="evenodd"/><path d="M365.50,292.20 H715.50 A18.80,18.80 0 0 1 734.30,311.00 V584.30 A20.80,20.80 0 0 1 713.50,605.10 H370.50 A28.80,28.80 0 0 1 341.70,576.30 V316.00 A23.80,23.80 0 0 1 365.50,292.20 Z" fill="none" stroke="#2b6cdc" stroke-width="2.4"/><path d="M370.8,309.1 H706.9000000000001 A12,12 0 0 1 718.9000000000001,321.1 V576.9000000000001 A12,12 0 0 1 706.9000000000001,588.9000000000001 H370.8 A12,12 0 0 1 358.8,576.9000000000001 V321.1 A12,12 0 0 1 370.8,309.1 Z" fill="none" stroke="#2b6cdc" stroke-width="2.4"/><path d="M337.5,345 V540 M739.4,350 V540 M400,609.6 H700" stroke="#a86e6e" stroke-width="1" opacity="0.8"/><path d="M381.0,296.5L392.0,307.3M409.4,307.3L420.9,296.5M435.8,296.5L446.8,307.3M463.6,307.3L475.1,296.5M490.6,296.5L501.6,307.3M517.8,307.3L529.3,296.5M545.4,296.5L556.4,307.3M572.0,307.3L583.5,296.5M600.2,296.5L611.2,307.3M626.2,307.3L637.7,296.5M655.0,296.5L666.0,307.3M680.4,307.3L691.9,296.5M388.0,600.5L398.0,590.2M406.7,590.2L418.2,602.5M442.2,600.5L452.2,590.2M460.9,590.2L472.4,602.5M496.4,600.5L506.4,590.2M515.1,590.2L526.6,602.5M550.6,600.5L560.6,590.2M569.3,590.2L580.8,602.5M604.8,600.5L614.8,590.2M623.5,590.2L635.0,602.5M659.0,600.5L669.0,590.2M677.7,590.2L689.2,602.5M343.0,374.0L356.5,360.0M343.0,365.5L354.5,376.0M720.5,374.5L732.0,361.5M720.5,362.5L731.5,375.0M343.0,428.2L356.5,414.2M343.0,419.7L354.5,430.2M720.5,428.7L732.0,415.7M720.5,416.7L731.5,429.2M343.0,482.5L356.5,468.5M343.0,474.0L354.5,484.5M720.5,483.0L732.0,470.0M720.5,471.0L731.5,483.5M343.0,537.0L356.5,523.0M343.0,528.5L354.5,539.0M720.5,537.5L732.0,524.5M720.5,525.5L731.5,538.0M344.3,318.6L368.6,294.8M345.0,313.4L356.4,324.7M705.0,294.7L733.5,323.0M720.0,322.0L733.0,310.0M346.0,585.0L357.0,577.8M348.4,584.0L363.3,600.0M710.0,601.9L733.5,579.0M720.0,576.0L733.0,590.0" stroke="#e0922a" stroke-width="2" fill="none"/>
</svg>
<svg class="a" style="left:0;top:0;z-index:5" width="1382" height="806" viewBox="0 0 1382 806"><circle cx="48" cy="73" r="8" fill="#ade2a4"/><rect x="43" y="71.9" width="10" height="2.3" fill="#fff"/><rect x="46.9" y="68" width="2.3" height="10" fill="#fff"/><path d="M162,71 L166.2,66 L166.2,76 Z" fill="#a8aeb7"/><path d="M165.5,71 C170.5,71 173.6,74 173.6,78 V80" stroke="#a8aeb7" stroke-width="2.2" fill="none"/><g transform="translate(396,0) scale(-1,1)"><path d="M162,71 L166.2,66 L166.2,76 Z" fill="#a8aeb7"/><path d="M165.5,71 C170.5,71 173.6,74 173.6,78 V80" stroke="#a8aeb7" stroke-width="2.2" fill="none"/></g><rect x="341" y="65.8" width="14" height="14" fill="none" stroke="#d3d5d8" stroke-width="1.6"/><rect x="345.2" y="70.2" width="5.8" height="5.6" rx="1" fill="#d3d5d8"/><rect x="400.5" y="65.5" width="15" height="15" fill="none" stroke="#ececec" stroke-width="1"/><rect x="400" y="65" width="1.8" height="16" fill="#d3d5d8"/><rect x="403.1" y="70.2" width="5.8" height="5.6" rx="1" fill="#d3d5d8"/><rect x="460.5" y="65.5" width="15" height="15" fill="none" stroke="#ececec" stroke-width="1"/><rect x="474.2" y="65" width="1.8" height="16" fill="#d3d5d8"/><rect x="467.1" y="70.1" width="5.8" height="5.6" rx="1" fill="#d3d5d8"/><rect x="520.5" y="65.5" width="15" height="15" fill="none" stroke="#ececec" stroke-width="1"/><rect x="520" y="79.2" width="16" height="1.8" fill="#d3d5d8"/><rect x="525" y="72.1" width="5.8" height="5.6" rx="1" fill="#d3d5d8"/><rect x="580.5" y="65.5" width="15" height="15" fill="none" stroke="#ececec" stroke-width="1"/><rect x="580" y="65" width="16" height="1.8" fill="#d3d5d8"/><rect x="585" y="68.1" width="5.8" height="5.6" rx="1" fill="#d3d5d8"/><path d="M718.5,69.5 H727.5 V78.5 H718.5 Z M718.5,69.5 L722,65.5 H731 V74.5 L727.5,78.5 M727.5,69.5 L731,65.5 M715,80.5 L719,78.6 M727.5,78.6 L715,80.5" stroke="#dedede" stroke-width="1" fill="none"/><rect x="800.5" y="65.5" width="15" height="15" fill="#fafafa" stroke="#ececec" stroke-width="1"/><rect x="800.5" y="73.5" width="7" height="7" fill="none" stroke="#dedede" stroke-width="1"/><path d="M807.5,73.5 L813.5,67.5 M810,67.5 H813.5 V71" stroke="#dedede" stroke-width="1" fill="none"/><path d="M936.5,70 A6,6 0 0 1 947.5,70.5" stroke="#3a414c" stroke-width="1.4" fill="none"/><path d="M947.5,74.8 A6,6 0 0 1 936.5,74.3" stroke="#3a414c" stroke-width="1.4" fill="none"/><path d="M933.8,70.8 L937.8,67.6 L938.6,72 Z M950.2,73.8 L946.2,77 L945.4,72.6 Z" fill="#3a414c"/><path d="M1014.6,70.6 H1024.2 V79.2 H1014.6 Z" stroke="#3a414c" stroke-width="1.3" fill="none"/><path d="M1014.6,70.6 L1018.4,66.8 H1027.8 V75.6 L1024.2,79.2" stroke="#3a414c" stroke-width="1.3" fill="none"/><path d="M1024.2,70.6 L1027.8,66.8 V75.6 L1024.2,79.2 Z" fill="#c4c8ce"/><path d="M1024.2,70.6 L1027.8,66.8" stroke="#3a414c" stroke-width="1.2"/><path d="M1097,65.8 L1103.4,69.2 V76.2 L1097,79.6 L1090.6,76.2 V69.2 Z" stroke="#3a414c" stroke-width="1.3" fill="none"/><path d="M1097,65.8 L1103.4,69.2 L1097,72.6 L1090.6,69.2 Z" fill="#3a414c"/><path d="M1097,72.6 V79.6" stroke="#9aa0a8" stroke-width="1.3"/><rect x="61.6" y="716" width="2" height="26" fill="#5cc43c"/><path d="M56,718.5 L69,718.5 L62.5,705.5 Z" fill="#5cc43c"/><rect x="74" y="747.5" width="20" height="2" fill="#f04848"/><path d="M93,742.5 L93,754.5 L105,748.5 Z" fill="#f04848"/><circle cx="62.5" cy="748.4" r="7.2" fill="#1db4ea"/><text x="67.6" y="753" font-family="Liberation Sans" font-size="11.5" fill="#1db4ea">Z</text><text x="67.4" y="710" font-family="Liberation Sans" font-size="11.5" font-weight="bold" fill="#8cc63e">Y</text><text x="107.8" y="753" font-family="Liberation Sans" font-size="11.5" font-weight="bold" fill="#f04848">X</text><circle cx="1113" cy="135" r="8.2" fill="#2f3a4c"/><text x="1113" y="139" text-anchor="middle" font-family="Liberation Serif" font-style="italic" font-weight="bold" font-size="10" fill="#fff">i</text><path d="M1113,274.5 L1120,278.4 V286 L1113,289.9 L1106,286 V278.4 Z M1106,278.4 L1113,282.3 L1120,278.4 M1113,282.3 V289.9" stroke="#2d3442" stroke-width="1.8" fill="none" stroke-linejoin="round"/></svg>
<!-- right panel -->
<div class="a" style="left:8px;top:109px;width:169px;height:1px;background:#e9e9e9"></div><div class="a" style="left:900px;top:109px;width:474px;height:1px;background:#e9e9e9"></div>
<div class="a" style="left:1090px;top:109px;width:284px;height:689px;background:#fff;border-left:2px solid #e2e2e2"></div>
<div class="a" style="left:1092px;top:110px;width:282px;height:50px;background:#f7f7f7"></div>
<div class="a" style="left:1092px;top:257px;width:282px;height:49px;background:#f7f7f7"></div>
<div class="t ph" style="left:1132px;top:128px">PRINT JOB INFORMATION</div>
<div class="t ph" style="left:1132px;top:275px">OBJECT VISUALISATION</div>
<div class="t inf" style="left:1113px;top:180px"><b style="display:inline-block;transform-origin:0 0;transform:scaleX(0.945)">Name:</b></div><div class="t inf" style="left:1152px;top:180px"><span style="display:inline-block;transform-origin:0 0;transform:scaleX(0.87)">DGR</span></div>
<div class="t inf" style="left:1113px;top:202px"><b style="display:inline-block;transform-origin:0 0;transform:scaleX(0.945)">Estimated time:</b></div><div class="t inf" style="left:1200px;top:202px">9 hr 48 min</div>
<div class="t inf" style="left:1113px;top:224px"><b style="display:inline-block;transform-origin:0 0;transform:scaleX(0.955)">Material length:</b></div><div class="t inf" style="left:1201px;top:224px">27.608 m</div>
<div class="t rl" style="left:1137px;top:333px">Optimized view</div>
<div class="t ds" style="left:1140px;top:356px">Hybrid view which shows how the</div>
<div class="t ds" style="left:1140px;top:371px">scene will be printed.</div>
<div class="t rl" style="left:1137px;top:410px">Detailed view</div>
<div class="t ds" style="left:1140px;top:433px">Comprehensive view which shows</div>
<div class="t ds" style="left:1140px;top:448px">full details of the scene.</div>
<div class="a" style="left:1110px;top:327px;width:22px;height:22px;border-radius:50%;border:2px solid #1ab4e8"></div>
<div class="a" style="left:1115px;top:332px;width:12px;height:12px;border-radius:50%;background:#1ab4e8"></div>
<div class="a" style="left:1110px;top:404px;width:22px;height:22px;border-radius:50%;border:2px solid #c4c4c4"></div>
<!-- buttons -->
<div class="a" style="left:1132px;top:701px;width:200px;height:36px;border:1px solid #c8c8c8;border-radius:3px;background:#fff"></div>
<div class="t" style="left:1132px;top:712px;width:200px;text-align:center;font-size:13.7px;font-weight:bold;color:#2b6cb6;"><span style="display:inline-block;transform:scaleX(0.93)">BACK TO EDIT</span></div>
<div class="a" style="left:1132px;top:747px;width:200px;height:36px;border-radius:3px;background:#00bdf0"></div>
<div class="t" style="left:1132px;top:758px;width:200px;text-align:center;font-size:13.7px;font-weight:bold;color:#fff;"><span style="display:inline-block;transform:scaleX(0.93)">SEND TO YSOFT SAFEQ</span></div>
<!-- slider -->
<div class="a" style="left:1009px;top:129px;width:60px;height:300px;background:#fff;border-radius:5px;box-shadow:0 1px 4px rgba(0,0,0,0.06)"></div>
<div class="a" style="left:1038px;top:149px;width:3px;height:96px;background:#b9b9b9"></div>
<div class="a" style="left:1038px;top:245px;width:3px;height:157px;background:#00bdf0"></div>
<div class="a" style="left:1032px;top:238px;width:15px;height:15px;border-radius:50%;background:#00bdf0;box-shadow:0 1px 3px rgba(0,0,0,0.18)"></div>
<div class="a" style="left:1032px;top:395px;width:15px;height:15px;border-radius:50%;background:#00bdf0;box-shadow:0 1px 3px rgba(0,0,0,0.18)"></div>
</body></html>
